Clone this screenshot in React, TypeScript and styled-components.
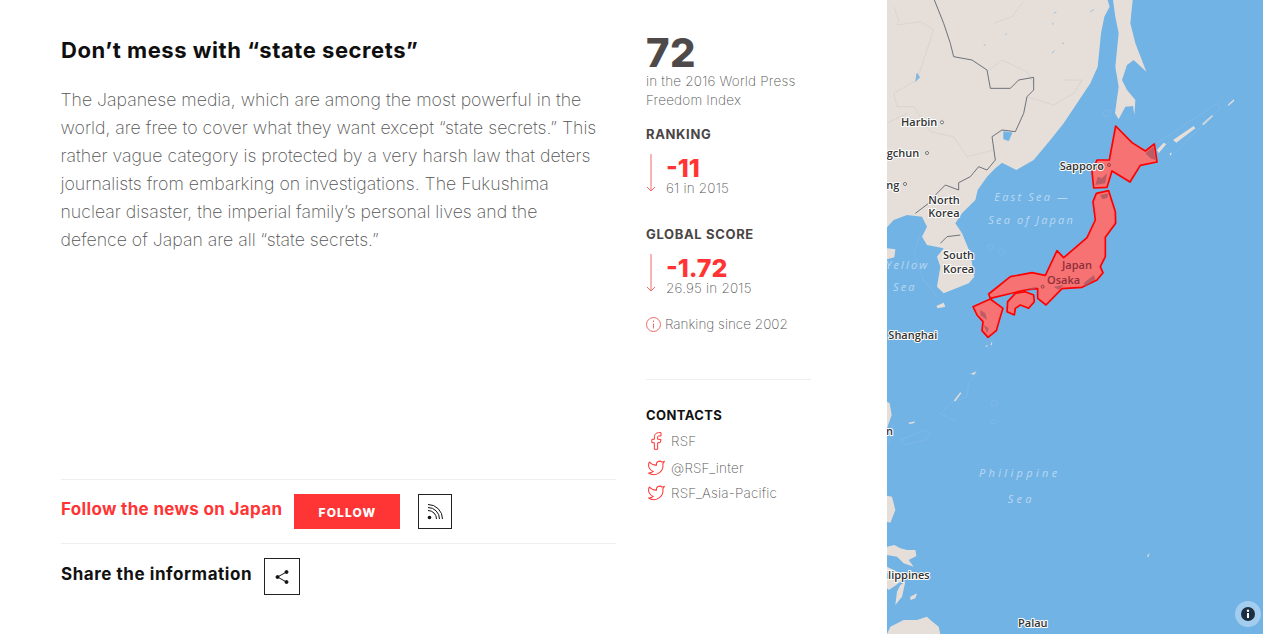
import React from "react";
import styled, { createGlobalStyle } from "styled-components";

const Global = createGlobalStyle`
  html, body { margin: 0; padding: 0; background: #fff; overflow: hidden; }
  * { box-sizing: border-box; }
`;
const Page = styled.div`
  display: flex; width: 1263px; height: 634px; overflow: hidden;
  font-family: "Inter", "Liberation Sans", sans-serif;
`;
const Content = styled.main`
  width: 887px; height: 634px; display: flex; padding-left: 61px;
`;
const Article = styled.article`
  width: 555px; height: 634px; display: flex; flex-direction: column;
`;
const Title = styled.h2`
  margin: 36px 0 0; font-size: 22px; line-height: 28px; font-weight: 700; color: #0f0f0f; letter-spacing: 0.55px;
`;
const Body = styled.p`
  margin: 22px 0 0 -0.5px; font-size: 17.7px; line-height: 28px; font-weight: 200; color: #555; width: 545px;
`;
const Spacer = styled.div` flex: 1; `;
const Row = styled.div`
  display: flex; align-items: flex-start; border-top: 1px solid #eee;
  height: ${(p: { $h: number }) => p.$h}px;
`;
const FollowText = styled.span`
  font-size: 17px; line-height: 22px; font-weight: 700; color: #ff3535; margin-top: 18px; letter-spacing: 0.33px;
`;
const FollowButton = styled.button`
  width: 106px; height: 35px; border: 0; background: #ff3535; color: #fff; margin: 14px 0 0 12px; padding: 1px 0 0;
  font: 800 12px "Inter", sans-serif; letter-spacing: 1.1px;
`;
const IconBox = styled.div`
  width: ${(p: { $w: number; $top: number; $left: number; $height: number }) => p.$w}px;
  height: ${(p) => p.$height}px; margin: ${(p) => p.$top}px 0 0 ${(p) => p.$left}px;
  border: 1px solid #222; display: flex; align-items: center; justify-content: center; color: #111;
`;
const ShareText = styled.span`
  font-size: 17px; line-height: 22px; font-weight: 700; color: #111; margin-top: 19px; letter-spacing: 0.55px;
`;
const Side = styled.aside`
  width: 165px; margin-left: 30px; height: 634px; display: flex; flex-direction: column;
`;
const Rank = styled.div`
  margin-top: 30px; font-size: 40px; line-height: 46px; font-weight: 800; color: #4f4a4a; letter-spacing: 0.5px;
`;
const Caption = styled.div`
  font-size: 13.5px; line-height: 19px; font-weight: 200; color: #555; margin-top: -4px; letter-spacing: 0.2px;
`;
const StatLabel = styled.h3`
  margin: ${(p: { $top: number }) => p.$top}px 0 0; font-size: 13px; line-height: 16px; font-weight: 700; color: #4a4545; letter-spacing: 0.65px;
`;
const Stat = styled.div`
  display: flex; margin-top: 12px; height: 44px;
`;
const StatValues = styled.div` margin-left: 10px; padding-top: 1px; `;
const Delta = styled.div`
  font-size: 25px; line-height: 26px; font-weight: 800; color: #ff3535;
`;
const Previous = styled.div`
  font-size: 13.5px; line-height: 14px; font-weight: 200; color: #555; letter-spacing: 0.2px;
`;
const Since = styled.div`
  display: flex; align-items: center; gap: 4px; margin-top: 17px; font-size: 13.5px; line-height: 18px; font-weight: 200; color: #555;
`;
const Rule = styled.hr`
  margin: 46px 0 0; border: 0; border-top: 1px solid #eee; width: 165px;
`;
const ContactsTitle = styled.h3`
  margin: 27px 0 0; font-size: 13px; line-height: 16px; font-weight: 700; color: #111; letter-spacing: 0.4px;
`;
const ContactList = styled.ul` list-style: none; margin: 5px 0 0; padding: 0; `;
const Contact = styled.li`
  display: flex; align-items: center; gap: 5px; height: ${(p: { $h: number }) => p.$h}px; font-size: 13.5px; font-weight: 200; color: #555; letter-spacing: 0.2px;
`;
const ContactIcon = styled.span` width: 20px; display: flex; justify-content: center; color: #ff3535; `;
const MapPanel = styled.section`
  position: relative; width: 376px; height: 634px; background: #72b3e5; overflow: hidden;
`;
const InfoHalo = styled.div`
  position: absolute; right: 2px; bottom: 7px; width: 26px; height: 26px; border-radius: 50%;
  background: rgba(255,255,255,.35); display: flex; align-items: center; justify-content: center;
`;

const Arrow = () => (
  <svg width="10" height="38" viewBox="0 0 10 38" fill="none" stroke="#f06a6a" strokeWidth="1">
    <path d="M5 0V37M1 33l4 4 4-4" />
  </svg>
);
const TwitterIcon = () => (
  <svg width="19" height="19" viewBox="0 0 24 24" fill="none" stroke="currentColor" strokeWidth="1.3" strokeLinejoin="round">
    <path d="M22 4s-.7 2.1-2 3.4c1.6 10-9.4 17.3-18 11.6 2.2.1 4.4-.6 6-2C3 15.5.5 9.6 3 5c2.2 2.6 5.6 4.1 9 4-.9-4.2 4-6.6 7-3.8 1.1 0 3-1.2 3-1.2z" />
  </svg>
);
const FacebookIcon = () => (
  <svg width="20" height="22" viewBox="0 0 24 24" fill="none" stroke="currentColor" strokeWidth="1.2" strokeLinejoin="round">
    <path d="M18 2h-3a5 5 0 0 0-5 5v3H7v4h3v8h4v-8h3l1-4h-4V7a1 1 0 0 1 1-1h3z" />
  </svg>
);
const RssIcon = () => (
  <svg width="18" height="18" viewBox="0 0 18 18" fill="none" stroke="#111" strokeWidth="1">
    <circle cx="3.5" cy="14.5" r="1.8" fill="#111" stroke="none" />
    <path d="M2 7.5a8.5 8.5 0 0 1 8.500 8.500M2 4.500a11.500 11.500 0 0 1 11.500 11.500M2 1.500a14.500 14.500 0 0 1 14.500 14.500" />
  </svg>
);
const ShareIcon = () => (
  <svg width="16" height="16" viewBox="0 0 16 16" fill="#111" stroke="#111" strokeWidth="1">
    <path d="M12.500 3 3.500 8l9 5" fill="none" />
    <circle cx="12.500" cy="3" r="1.500" /><circle cx="3.500" cy="8" r="1.500" /><circle cx="12.500" cy="13" r="1.500" />
  </svg>
);
const InfoIcon = () => (
  <svg width="14" height="14" viewBox="0 0 14 14">
    <circle cx="7" cy="7" r="7" fill="#1c2f40" />
    <rect x="6" y="6" width="2" height="5" fill="#fff" />
    <circle cx="7" cy="3.800" r="1.200" fill="#fff" />
  </svg>
);

const Label = styled.text`
  font-family: "Open Sans", "Noto Sans", sans-serif; font-size: 33px; font-weight: 600; fill: #333;
  paint-order: stroke; stroke: #fff; stroke-width: 6px; stroke-linejoin: round;
`;
const SeaLabel = styled.text`
  font-family: "Open Sans", "Noto Sans", sans-serif; font-size: 33px; font-style: italic; fill: #b9d8f2; letter-spacing: 6.500px;
`;
const JapanLabel = styled.text`
  font-family: "Open Sans", "Noto Sans", sans-serif; font-size: 33px; font-weight: 600; fill: #8f2f3a;
`;

const land = "#e6dfd9";
const MapDrawing = () => (
  <svg width="376" height="634" viewBox="0 0 1128 1902">
    <path fill={land} d="M0 0H662L668 20 652 50 642 100 637 150 632 200 610 250 570 310 530 370 490 420 440 480 388 510 345 488 325 505 300 530 272 570 265 600 225 640 205 670 225 700 250 760 262 830 245 850 170 880 150 860 160 800 150 770 170 745 120 735 105 710 120 680 105 650 60 645 20 660 0 682Z" />
    <path fill={land} d="M678 0 685 50 695 100 685 200 695 260 684 340 695 358 715 320 738 318 742 345 745 300 720 270 705 240 720 195 740 180 778 215 745 130 730 70 737 0Z" />
    <path fill={land} d="M0 745 25 748 22 772 0 778ZM0 1205 8 1210 14 1245 0 1285ZM148 918 170 908 175 920 152 925ZM0 1487 15 1490 25 1530 10 1568 0 1565Z" />
    <path fill={land} d="M0 1640 22 1635 40 1645 60 1650 85 1650 88 1668 65 1680 80 1700 50 1690 30 1670 0 1665ZM0 1700 20 1710 50 1725 75 1720 115 1725 100 1740 55 1735 20 1760 5 1770 0 1765ZM40 1755 55 1745 45 1790 25 1815 30 1775ZM70 1790 90 1780 85 1795 70 1800ZM0 1902 10 1880 50 1860 90 1860 120 1850 130 1860 155 1880 160 1902Z" />
    <path fill={land} d="M810 450 830 428 838 432 815 460ZM858 420 920 378 925 385 868 428ZM945 372 975 345 978 349 950 376ZM1022 315 1040 298 1042 302 1025 317ZM848 460 855 458 850 468Z" />
    <path fill={land} d="M200 1202 220 1177 223 1180 205 1204ZM250 1122 268 1114 262 1124ZM65 1268 85 1264 80 1270 66 1272ZM295 1037 302 1036 300 1042ZM310 1035 316 1022 314 1036ZM780 1668 788 1658 784 1672Z" />
    <g fill="none" stroke="#72b3e5" strokeWidth="2">
      <path d="M500 40l8-4M610 35l10-6M355 105l5-5M290 135h6M525 130h6M495 160l7-8M498 68v6" />
      <path d="M350 395l25 3-10 24-15-5zM90 220l8 12-12 12z" fill="#72b3e5" />
    </g>
    <g fill="none" stroke="#c9c4c3" strokeWidth="1.600">
      <path d="M20 20 35 60 30 75 100 65 140 90 120 150 90 240 20 280 30 320 80 320 130 395 200 410 240 470 320 450M300 215 345 180 420 215 440 250M320 70 375 50 410 5M420 290 500 315 560 280 585 240 530 240M0 370 60 340" strokeDasharray="4 1" />
    </g>
    <g fill="none" stroke="#86bde9" strokeWidth="1.500">
      <path d="M100 700 80 760 110 840 150 890M20 1270 5 1330M205 1265 160 1240 190 1210 240 1190 245 1150 270 1120M40 1320l15 15 60-15 15-20-20-10z" />
      <circle cx="310" cy="742" r="8" /><circle cx="342" cy="755" r="9" /><circle cx="322" cy="1210" r="9" /><circle cx="319" cy="1265" r="7" /><circle cx="660" cy="340" r="11" /><path d="M810 430 990 310 1000 325 860 460" />
    </g>
    <path fill="none" stroke="#59606b" strokeWidth="2.600" d="M142 0 170 70 190 130 200 170 255 180 300 210 310 265 370 265 395 240 440 232 440 270 420 290 410 340 385 395 345 390 315 410 325 480 300 510 275 500 250 530 215 548 215 570 175 555 150 580 125 610 85 640M160 730 180 710 220 705" />
    <g fill="#f77272" stroke="#f00" strokeWidth="5" strokeLinejoin="round">
      <path d="M686 378 735 428 775 453 802 432 810 486 760 496 729 546 675 513 660 562 620 564 615 515 630 480 667 480Z" />
      <path d="M665 572 685 635 686 670 655 712 655 770 640 800 648 818 630 840 585 862 525 866 477 915 452 895 452 866 415 870 310 895 305 882 370 830 435 818 475 826 510 752 530 773 600 713 625 660 618 605 628 580Z" />
      <path d="M415 875 440 885 442 905 425 925 400 915 385 925 382 945 360 935 362 905 385 880Z" />
      <path d="M258 920 310 897 348 925 340 950 328 992 303 1012 285 992 288 965 270 945Z" />
    </g>
    <g fill="#a3535f" opacity=".7">
      <path d="M632 530 645 535 660 520 655 550 625 555ZM640 585 665 580 660 595 645 597ZM590 850 620 825 625 838 595 860ZM500 860 530 855 515 870ZM420 866 450 860 440 870ZM280 930 295 940 300 960 280 945ZM290 975 305 985 300 1000ZM775 460 800 440 805 480 790 475Z" />
    </g>
    <Label x="42" y="378">Harbin</Label>
    <circle cx="165" cy="367" r="4.500" fill="#fff" stroke="#333" strokeWidth="2" />
    <Label x="-22" y="472">ngchun</Label>
    <circle cx="120" cy="459" r="4.500" fill="#fff" stroke="#333" strokeWidth="2" />
    <Label x="-2" y="566">ng</Label>
    <circle cx="54" cy="552" r="4.500" fill="#fff" stroke="#333" strokeWidth="2" />
    <Label x="124" y="612">North</Label>
    <Label x="124" y="652">Korea</Label>
    <Label x="168" y="778">South</Label>
    <Label x="168" y="818">Korea</Label>
    <Label x="4" y="1017">Shanghai</Label>
    <Label x="-22" y="1304">an</Label>
    <Label x="-6" y="1737">ilippines</Label>
    <Label x="393" y="1882">Palau</Label>
    <Label x="518" y="510">Sapporo</Label>
    <circle cx="666" cy="495" r="4.500" fill="none" stroke="#6b2a30" strokeWidth="2" />
    <circle cx="640" cy="500" r="5" fill="none" stroke="#6b2a30" strokeWidth="2" />
    <SeaLabel x="322" y="602">East Sea —</SeaLabel>
    <SeaLabel x="304" y="671">Sea of Japan</SeaLabel>
    <SeaLabel x="-4" y="807">Yellow</SeaLabel>
    <SeaLabel x="18" y="873">Sea</SeaLabel>
    <SeaLabel x="276" y="1431" style={{ letterSpacing: 10 }}>Philippine</SeaLabel>
    <SeaLabel x="362" y="1509" style={{ letterSpacing: 10 }}>Sea</SeaLabel>
    <JapanLabel x="525" y="808">Japan</JapanLabel>
    <JapanLabel x="480" y="853">Osaka</JapanLabel>
    <circle cx="467" cy="860" r="4.500" fill="none" stroke="#6b2a30" strokeWidth="2" />
  </svg>
);

export default function App() {
  return (
    <Page>
      <Global />
      <Content>
        <Article>
          <Title>Don’t mess with “state secrets”</Title>
          <Body>
            The Japanese media, which are among the most powerful in the world, are free to cover what they want except “state secrets.” This rather vague category is protected by a very harsh law that deters journalists from embarking on investigations. The Fukushima nuclear disaster, the imperial family’s personal lives and the defence of Japan are all “state secrets.”
          </Body>
          <Spacer />
          <Row $h={64}>
            <FollowText>Follow the news on Japan</FollowText>
            <FollowButton>FOLLOW</FollowButton>
            <IconBox $w={34} $height={35} $top={14} $left={18}><RssIcon /></IconBox>
          </Row>
          <Row $h={91}>
            <ShareText>Share the information</ShareText>
            <IconBox $w={36} $height={37} $top={14} $left={12}><ShareIcon /></IconBox>
          </Row>
        </Article>
        <Side>
          <Rank>72</Rank>
          <Caption>in the 2016 World Press Freedom Index</Caption>
          <StatLabel $top={16}>RANKING</StatLabel>
          <Stat>
            <Arrow />
            <StatValues><Delta>-11</Delta><Previous>61 in 2015</Previous></StatValues>
          </Stat>
          <StatLabel $top={28}>GLOBAL SCORE</StatLabel>
          <Stat>
            <Arrow />
            <StatValues><Delta>-1.72</Delta><Previous>26.95 in 2015</Previous></StatValues>
          </Stat>
          <Since>
            <svg width="15" height="15" viewBox="0 0 15 15" fill="none" stroke="#f06a6a" strokeWidth="1">
              <circle cx="7.500" cy="7.500" r="7" /><path d="M7.500 6.500V11.500M7.500 3.500V5" />
            </svg>
            Ranking since 2002
          </Since>
          <Rule />
          <ContactsTitle>CONTACTS</ContactsTitle>
          <ContactList>
            <Contact $h={26}><ContactIcon><FacebookIcon /></ContactIcon>RSF</Contact>
            <Contact $h={27}><ContactIcon><TwitterIcon /></ContactIcon>@RSF_inter</Contact>
            <Contact $h={23}><ContactIcon><TwitterIcon /></ContactIcon>RSF_Asia-Pacific</Contact>
          </ContactList>
        </Side>
      </Content>
      <MapPanel>
        <MapDrawing />
        <InfoHalo><InfoIcon /></InfoHalo>
      </MapPanel>
    </Page>
  );
}
